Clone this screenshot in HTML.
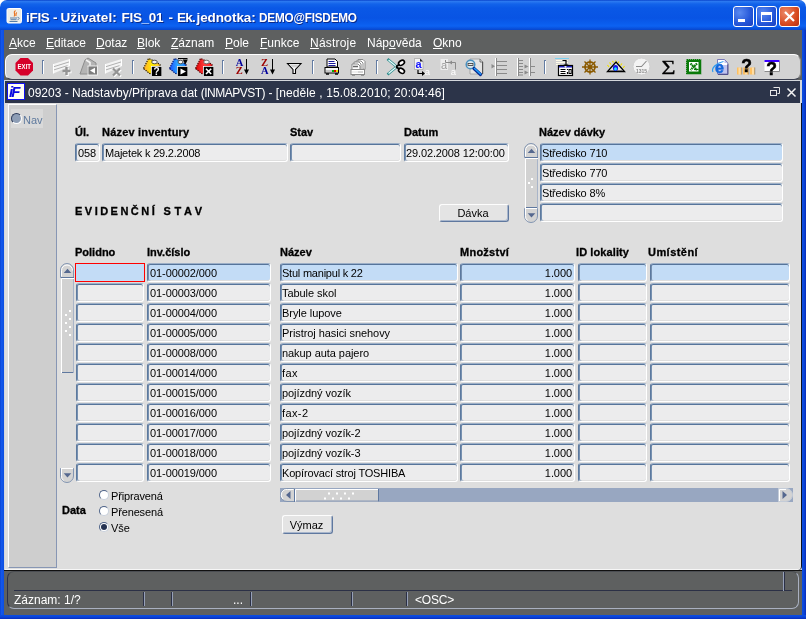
<!DOCTYPE html>
<html lang="cs"><head><meta charset="utf-8"><title>iFIS</title>
<style>
*{box-sizing:border-box;margin:0;padding:0}
html,body{width:806px;height:619px;overflow:hidden;background:#fff}
#w{position:absolute;left:0;top:0;width:806px;height:619px;will-change:transform}
body{position:relative;font-family:"Liberation Sans","DejaVu Sans",sans-serif;font-size:11px;color:#000}
.abs,.f,.lb,.btn,.t,.mi,.rad,.sep{position:absolute}
#title{left:0;top:0;width:806px;height:30px;border-radius:7px 7px 0 0;
 background:linear-gradient(#0a44cc 0,#2a78f0 1.500px,#1263ea 4px,#0a58e6 8px,#0854e4 18px,#0a5cec 23px,#0c62f2 26px,#0a54e0 28px,#0846cc 30px)}
#title .txt{position:absolute;left:26px;top:10px;font:bold 13.5px/16px "Liberation Sans","DejaVu Sans",sans-serif;color:#fff;white-space:nowrap;text-shadow:1px 1px 0 #0a2a8a;letter-spacing:-0.23px}
.wb{position:absolute;top:6px;width:21px;height:21px;border:1px solid #fff;border-radius:3px;background:radial-gradient(circle at 30% 30%,#5a8af0,#2456d8 60%,#1a3fc0)}
.wb.x{background:radial-gradient(circle at 30% 30%,#ec8a6a,#d84a20 60%,#b83010)}
#lbor{left:0;top:30px;width:4px;height:589px;background:linear-gradient(90deg,#0a44d4,#1458ec 40%,#0c4ee0)}
#rbor{left:802px;top:30px;width:4px;height:589px;background:linear-gradient(90deg,#0c4ee0,#0a44d8 50%,#0a2cb8)}
#bbor{left:0;top:615px;width:806px;height:4px;background:linear-gradient(#0c4ee0,#0a44d8 50%,#0a2cb8)}
#menu{left:4px;top:30px;width:798px;height:51px;background:#5e6060}
.mi{top:36px;font-size:12px;line-height:14px;color:#fff;white-space:nowrap}
.mi u{text-decoration:underline}
#tb{left:5px;top:54px;width:796px;height:26px;border-radius:7px;background:#d3d3d3;border:1px solid;border-color:#fff #8c8c8c #3a3f50 #fff}
.sep{top:60px;width:2px;height:14px;border-left:1px solid #647ca2;background:#fff;border-top:1px solid #647ca2}
#mdiw{left:4px;top:80px;width:798px;height:491px;background:#d4d7dc}
#mdit{left:5px;top:81px;width:795px;height:22px;background:#2c3449}
#mdit .txt{position:absolute;left:23px;top:5px;font-size:12px;line-height:14px;color:#fff;white-space:nowrap}
#mdii{left:7px;top:83px;width:18px;height:17px;background:#fffff4;border:1px solid #1010f0;overflow:hidden}
#mdii span{position:absolute;left:1px;top:-1px;font:italic bold 15px "Liberation Sans",sans-serif;color:#0a0ae0;letter-spacing:-2px}
#content{left:5px;top:103px;width:797px;height:467px;background:#dedede;border-radius:0 0 4px 0;border-right:1px solid #0c1020;box-shadow:inset 0 -1px 0 #f6f6f6}
#nav{left:8px;top:104px;width:49px;height:464px;background:#cecece;border:1px solid;border-color:#fff #8796b4 #8796b4 #fff}
#status{left:4px;top:570px;width:798px;height:45px;background:#5e6060;border-top:1px solid #111}
#sbox{left:7px;top:571px;width:792px;height:38px;border:1px solid;border-color:#4a4d52 #a9b0c0 #a9b0c0 #2b3046;border-radius:7px}
.sl{position:absolute;background:#2b3046}
.sv{position:absolute;top:592px;width:2px;height:14px;background:#2b3046;border-right:1px solid #96a0b8}
.lb{font-weight:bold;font-size:11px;white-space:nowrap;line-height:13px;-webkit-text-stroke:0.3px #000}
.f{height:19px;background:#ececed;border:1px solid;border-color:#9cafc7 #fff #fff #5c799e;box-shadow:inset 0 1px 0 #56749a,inset 1px 0 0 #7690b0,inset 0 -1px 0 #dedede;border-radius:3px;font-size:11px;line-height:14px;padding:2px 0 0 1px;white-space:nowrap;overflow:hidden;letter-spacing:-0.06px}
.f.u{}
.f.hl{background:#c3dcf6}
.f.cur{border:1px solid #f00;border-radius:0;box-shadow:none}
.f.r{text-align:right;padding-right:2px}
.f.n{letter-spacing:-0.08px;padding-left:2px}
.btn{background:#e4e4e4;border:1px solid;border-color:#fdfdfd #5f789f #5f789f #fdfdfd;border-radius:3px;font-size:11px;text-align:center;line-height:17px;box-shadow:inset -1px -1px 0 #a8b6cc}
.t{font-size:11px;white-space:nowrap;line-height:13px}
.rad{width:10px;height:10px;border-radius:50%;background:#fff;border:1px solid;border-color:#4e6388 #c8d0dc #c8d0dc #4e6388}
.rad.on::after{content:"";position:absolute;left:1px;top:1px;width:6px;height:6px;border-radius:50%;background:#243252}
.sb{position:absolute;background:#d2d2d2}
svg{position:absolute;left:0;top:0;overflow:visible}
svg text{font-family:"Liberation Sans",sans-serif}

</style></head>
<body>
<div id="w">
<div id="title" class="abs"><span class="txt" style="left:26px;letter-spacing:-0.3px">iFIS -</span><span class="txt" style="left:60.5px;letter-spacing:0.1px">Uživatel:</span><span class="txt" style="left:121.5px;letter-spacing:-0.3px">FIS_01</span><span class="txt" style="left:168.5px">-</span><span class="txt" style="left:177px;letter-spacing:-0.7px">Ek.</span><span class="txt" style="left:196.5px;letter-spacing:-0.1px">jednotka:</span><span class="txt" style="left:258.5px;transform:scaleX(0.870);transform-origin:0 0">DEMO@FISDEMO</span>
<div class="wb" style="left:733px"></div><div class="wb" style="left:756px"></div><div class="wb x" style="left:779px"></div></div>
<div id="menu" class="abs"></div>
<div id="lbor" class="abs"></div><div id="rbor" class="abs"></div><div id="bbor" class="abs"></div>
<span class="mi" style="left:9px"><u>A</u>kce</span>
<span class="mi" style="left:46px"><u>E</u>ditace</span>
<span class="mi" style="left:96px"><u>D</u>otaz</span>
<span class="mi" style="left:137px"><u>B</u>lok</span>
<span class="mi" style="left:171px"><u>Z</u>áznam</span>
<span class="mi" style="left:225px"><u>P</u>ole</span>
<span class="mi" style="left:260px"><u>F</u>unkce</span>
<span class="mi" style="left:310px;letter-spacing:0.2px"><u>N</u>ástroje</span>
<span class="mi" style="left:367px">Náp<u>o</u>věda</span>
<span class="mi" style="left:433px"><u>O</u>kno</span>
<div id="tb" class="abs"></div>
<div class="sep" style="left:42px"></div>
<div class="sep" style="left:132px"></div>
<div class="sep" style="left:222px"></div>
<div class="sep" style="left:312px"></div>
<div class="sep" style="left:376px"></div>
<div class="sep" style="left:544px"></div>
<div id="mdiw" class="abs"></div>
<div id="mdit" class="abs"><span class="txt">09203 - Nadstavby/Příprava dat <span style="letter-spacing:-0.5px">(INMAPVST)</span> - <span style="letter-spacing:0.1px">[neděle , 15.08.2010; 20:04:46]</span></span></div>
<div id="mdii" class="abs"><span>iF</span></div>
<div id="content" class="abs"></div>
<div id="nav" class="abs"></div>
<div class="abs" style="left:11px;top:109px;width:32px;height:19px;background:#d9d9d9"></div>
<div class="rad" style="left:11px;top:113px;width:11px;height:11px;background:#8d9db5;border-color:#2f3d5c #fff #fff #2f3d5c"></div>
<span class="t" style="left:23px;top:114px;color:#5f7a9e">Nav</span>
<span class="lb" style="left:75px;top:126px">Úl.</span>
<span class="lb" style="left:102px;top:126px;letter-spacing:0.2px">Název inventury</span>
<span class="lb" style="left:290px;top:126px">Stav</span>
<span class="lb" style="left:404px;top:126px">Datum</span>
<span class="lb" style="left:539px;top:126px">Název dávky</span>
<div class="f u n" style="left:75px;top:143px;width:25px">058</div>
<div class="f u" style="left:102px;top:143px;width:186px;letter-spacing:-0.2px;padding-left:2px">Majetek k 29.2.2008</div>
<div class="f u" style="left:290px;top:143px;width:111px"></div>
<div class="f u" style="left:404px;top:143px;width:105px;letter-spacing:-0.12px">29.02.2008 12:00:00</div>
<div class="f u hl" style="left:540px;top:143px;width:243px;letter-spacing:-0.15px">Středisko 710</div>
<div class="f u" style="left:540px;top:163px;width:243px;letter-spacing:-0.15px">Středisko 770</div>
<div class="f u" style="left:540px;top:183px;width:243px;letter-spacing:-0.15px">Středisko 8%</div>
<div class="f u" style="left:540px;top:203px;width:243px"></div>
<span class="lb" style="left:75px;top:205px;letter-spacing:2.48px">EVIDENČNÍ</span><span class="lb" style="left:163.500px;top:205px;letter-spacing:3.600px">STAV</span>
<div class="btn" style="left:439px;top:204px;width:70px;height:18px;line-height:16px;padding-right:2px">Dávka</div>
<span class="lb" style="left:75px;top:246px">Polidno</span>
<span class="lb" style="left:147px;top:246px">Inv.číslo</span>
<span class="lb" style="left:280px;top:246px">Název</span>
<span class="lb" style="left:460px;top:246px;letter-spacing:0.25px">Množství</span>
<span class="lb" style="left:576px;top:246px;letter-spacing:0.1px">ID lokality</span>
<span class="lb" style="left:648px;top:246px;letter-spacing:0.45px">Umístění</span>
<div class="f hl cur" style="left:75px;top:263px;width:70px"></div>
<div class="f hl n" style="left:147px;top:263px;width:124px">01-00002/000</div>
<div class="f hl" style="left:280px;top:263px;width:178px;letter-spacing:-0.22px">Stul manipul k 22</div>
<div class="f hl r n" style="left:460px;top:263px;width:115px">1.000</div>
<div class="f hl" style="left:578px;top:263px;width:69px"></div>
<div class="f hl" style="left:650px;top:263px;width:140px"></div>
<div class="f" style="left:76px;top:283px;width:68px"></div>
<div class="f n" style="left:147px;top:283px;width:124px">01-00003/000</div>
<div class="f" style="left:280px;top:283px;width:178px">Tabule skol</div>
<div class="f r n" style="left:460px;top:283px;width:115px">1.000</div>
<div class="f" style="left:578px;top:283px;width:69px"></div>
<div class="f" style="left:650px;top:283px;width:140px"></div>
<div class="f" style="left:76px;top:303px;width:68px"></div>
<div class="f n" style="left:147px;top:303px;width:124px">01-00004/000</div>
<div class="f" style="left:280px;top:303px;width:178px">Bryle lupove</div>
<div class="f r n" style="left:460px;top:303px;width:115px">1.000</div>
<div class="f" style="left:578px;top:303px;width:69px"></div>
<div class="f" style="left:650px;top:303px;width:140px"></div>
<div class="f" style="left:76px;top:323px;width:68px"></div>
<div class="f n" style="left:147px;top:323px;width:124px">01-00005/000</div>
<div class="f" style="left:280px;top:323px;width:178px">Pristroj hasici snehovy</div>
<div class="f r n" style="left:460px;top:323px;width:115px">1.000</div>
<div class="f" style="left:578px;top:323px;width:69px"></div>
<div class="f" style="left:650px;top:323px;width:140px"></div>
<div class="f" style="left:76px;top:343px;width:68px"></div>
<div class="f n" style="left:147px;top:343px;width:124px">01-00008/000</div>
<div class="f" style="left:280px;top:343px;width:178px">nakup auta pajero</div>
<div class="f r n" style="left:460px;top:343px;width:115px">1.000</div>
<div class="f" style="left:578px;top:343px;width:69px"></div>
<div class="f" style="left:650px;top:343px;width:140px"></div>
<div class="f" style="left:76px;top:363px;width:68px"></div>
<div class="f n" style="left:147px;top:363px;width:124px">01-00014/000</div>
<div class="f" style="left:280px;top:363px;width:178px;letter-spacing:0.4px">fax</div>
<div class="f r n" style="left:460px;top:363px;width:115px">1.000</div>
<div class="f" style="left:578px;top:363px;width:69px"></div>
<div class="f" style="left:650px;top:363px;width:140px"></div>
<div class="f" style="left:76px;top:383px;width:68px"></div>
<div class="f n" style="left:147px;top:383px;width:124px">01-00015/000</div>
<div class="f" style="left:280px;top:383px;width:178px">pojízdný vozík</div>
<div class="f r n" style="left:460px;top:383px;width:115px">1.000</div>
<div class="f" style="left:578px;top:383px;width:69px"></div>
<div class="f" style="left:650px;top:383px;width:140px"></div>
<div class="f" style="left:76px;top:403px;width:68px"></div>
<div class="f n" style="left:147px;top:403px;width:124px">01-00016/000</div>
<div class="f" style="left:280px;top:403px;width:178px;letter-spacing:0.4px">fax-2</div>
<div class="f r n" style="left:460px;top:403px;width:115px">1.000</div>
<div class="f" style="left:578px;top:403px;width:69px"></div>
<div class="f" style="left:650px;top:403px;width:140px"></div>
<div class="f" style="left:76px;top:423px;width:68px"></div>
<div class="f n" style="left:147px;top:423px;width:124px">01-00017/000</div>
<div class="f" style="left:280px;top:423px;width:178px">pojízdný vozík-2</div>
<div class="f r n" style="left:460px;top:423px;width:115px">1.000</div>
<div class="f" style="left:578px;top:423px;width:69px"></div>
<div class="f" style="left:650px;top:423px;width:140px"></div>
<div class="f" style="left:76px;top:443px;width:68px"></div>
<div class="f n" style="left:147px;top:443px;width:124px">01-00018/000</div>
<div class="f" style="left:280px;top:443px;width:178px">pojízdný vozík-3</div>
<div class="f r n" style="left:460px;top:443px;width:115px">1.000</div>
<div class="f" style="left:578px;top:443px;width:69px"></div>
<div class="f" style="left:650px;top:443px;width:140px"></div>
<div class="f" style="left:76px;top:463px;width:68px"></div>
<div class="f n" style="left:147px;top:463px;width:124px">01-00019/000</div>
<div class="f" style="left:280px;top:463px;width:178px;letter-spacing:-0.17px">Kopírovací stroj TOSHIBA</div>
<div class="f r n" style="left:460px;top:463px;width:115px">1.000</div>
<div class="f" style="left:578px;top:463px;width:69px"></div>
<div class="f" style="left:650px;top:463px;width:140px"></div>
<span class="lb" style="left:62px;top:504px">Data</span>
<div class="rad" style="left:99px;top:490px"></div>
<div class="rad" style="left:99px;top:506px"></div>
<div class="rad on" style="left:99px;top:522px"></div>
<span class="t" style="left:111px;top:490px;letter-spacing:-0.15px">Připravená</span>
<span class="t" style="left:111px;top:506px;letter-spacing:-0.15px">Přenesená</span>
<span class="t" style="left:111px;top:522px">Vše</span>
<div class="btn" style="left:282px;top:515px;width:51px;height:19px;padding:1px 2px 0 0;line-height:16px">Výmaz</div>
<div id="status" class="abs"></div>
<div id="sbox" class="abs"></div>
<div class="sl" style="left:14px;top:590px;width:778px;height:1px"></div>
<div class="sv" style="left:143px"></div>
<div class="sv" style="left:171px"></div>
<div class="sv" style="left:250px"></div>
<div class="sv" style="left:351px"></div>
<div class="sv" style="left:406px"></div>
<div class="sv" style="left:783px;top:572px;height:19px;background:#96a0b8;border-right:1px solid #2b3046"></div>
<span class="t" style="left:14px;top:593px;color:#fff;font-size:12px;line-height:14px">Záznam: 1/?</span>
<span class="t" style="left:233px;top:593px;color:#fff;font-size:12px;line-height:14px">...</span>
<span class="t" style="left:415px;top:593px;color:#fff;font-size:12px;line-height:14px;letter-spacing:-0.2px">&lt;OSC&gt;</span>
<svg width="806" height="619" viewBox="0 0 806 619">
<path d="M524.5 157.5V150.0A6.5 6.5 0 0 1 537.5 150.0V157.5z" fill="#d3d3d3" stroke="#8295b2" stroke-width="1"/><path d="M525.5 156.5V150.5A5.5 5.5 0 0 1 536.5 150.5" fill="none" stroke="#fff" stroke-width="1"/><path d="M525 157.5H538" stroke="#5f789f" stroke-width="1"/><polygon points="527.7,153 535.3,153 531.5,148.8" fill="#55688f"/>
<rect x="525" y="158" width="13" height="50" fill="#d2d2d2"/><path d="M525.5 208V158.5H538" fill="none" stroke="#fff" stroke-width="1"/><path d="M526 207.5H538" stroke="#5f789f" stroke-width="1"/><path d="M537.5 159V208" stroke="#a8b4c8" stroke-width="1"/><rect x="531" y="178" width="2" height="2" fill="#fff"/><rect x="528" y="182" width="2" height="2" fill="#fff"/><rect x="531" y="186" width="2" height="2" fill="#fff"/><rect x="531" y="186" width="2" height="2" fill="#fff"/>
<path d="M524.5 208.5V216.0A6.5 6.5 0 0 0 537.5 216.0V208.5z" fill="#d3d3d3" stroke="#8295b2" stroke-width="1"/><path d="M525 208.5H537" stroke="#fff" stroke-width="1"/><path d="M525.5 208.5V215.5A5.5 5.5 0 0 0 527.5 220.5" fill="none" stroke="#fff" stroke-width="1"/><polygon points="527.7,213.2 535.3,213.2 531.5,217.4" fill="#55688f"/>
<path d="M60.5 277.5V270.0A6.5 6.5 0 0 1 73.5 270.0V277.5z" fill="#d3d3d3" stroke="#8295b2" stroke-width="1"/><path d="M61.5 276.5V270.5A5.5 5.5 0 0 1 72.5 270.5" fill="none" stroke="#fff" stroke-width="1"/><path d="M61 277.5H74" stroke="#5f789f" stroke-width="1"/><polygon points="63.7,273 71.3,273 67.5,268.8" fill="#55688f"/>
<rect x="61" y="278" width="13" height="95" fill="#d2d2d2"/><path d="M61.5 373V278.5H74" fill="none" stroke="#fff" stroke-width="1"/><path d="M62 372.5H74" stroke="#5f789f" stroke-width="1"/><path d="M73.5 279V373" stroke="#a8b4c8" stroke-width="1"/><rect x="69" y="310" width="2" height="2" fill="#fff"/><rect x="69" y="318" width="2" height="2" fill="#fff"/><rect x="69" y="326" width="2" height="2" fill="#fff"/><rect x="69" y="334" width="2" height="2" fill="#fff"/><rect x="65" y="314" width="2" height="2" fill="#fff"/><rect x="65" y="322" width="2" height="2" fill="#fff"/><rect x="65" y="330" width="2" height="2" fill="#fff"/>
<path d="M60.5 468.5V476.0A6.5 6.5 0 0 0 73.5 476.0V468.5z" fill="#d3d3d3" stroke="#8295b2" stroke-width="1"/><path d="M61 468.5H73" stroke="#fff" stroke-width="1"/><path d="M61.5 468.5V475.5A5.5 5.5 0 0 0 63.5 480.5" fill="none" stroke="#fff" stroke-width="1"/><polygon points="63.7,473.2 71.3,473.2 67.5,477.4" fill="#55688f"/>
<rect x="280" y="488" width="513" height="14" fill="#98a7c1"/>
<path d="M294.500 488.500H287A6.500 6.500 0 0 0 287 501.500H294.500z" fill="#d3d3d3" stroke="#8295b2" stroke-width="1"/>
<path d="M293.500 489.500H287.500A5.500 5.500 0 0 0 283 499" fill="none" stroke="#fff" stroke-width="1"/>
<polygon points="290.500,491 290.500,499 286,495" fill="#55688f"/>
<path d="M294.500 489V502" stroke="#5f789f" stroke-width="1"/>
<rect x="295" y="489" width="84" height="12.500" fill="#d2d2d2"/>
<path d="M295.500 501.500V489.500H378" fill="none" stroke="#fff" stroke-width="1"/>
<path d="M378.500 489V501.500" stroke="#5f789f" stroke-width="1"/>
<path d="M296 501H378" stroke="#8a9ab6" stroke-width="1"/>
<rect x="328" y="492.500" width="2" height="2" fill="#fff"/>
<rect x="324" y="497.500" width="2" height="2" fill="#fff"/>
<rect x="336" y="492.500" width="2" height="2" fill="#fff"/>
<rect x="332" y="497.500" width="2" height="2" fill="#fff"/>
<rect x="344" y="492.500" width="2" height="2" fill="#fff"/>
<rect x="340" y="497.500" width="2" height="2" fill="#fff"/>
<rect x="352" y="492.500" width="2" height="2" fill="#fff"/>
<rect x="348" y="497.500" width="2" height="2" fill="#fff"/>
<path d="M778.500 488.500H786A6.500 6.500 0 0 1 786 501.500H778.500z" fill="#d3d3d3" stroke="#c4ccd8" stroke-width="1"/>
<path d="M779.500 501V489.500H786" fill="none" stroke="#fff" stroke-width="1"/>
<polygon points="782.500,491 782.500,499 787,495" fill="#55688f"/>
</svg>
<svg width="806" height="619" viewBox="0 0 806 619" shape-rendering="auto">
<!-- title bar java icon -->
<g>
<rect x="7" y="8.5" width="14.5" height="14.5" rx="1.5" fill="#efede6" stroke="#fff" stroke-width="1"/>
<path d="M10 18h7M10.5 19.7h6M9.5 21.5h8" stroke="#5a7fa8" stroke-width="1" fill="none"/>
<path d="M17.5 17.3c2.2 0 2.2 2 0 2.4" stroke="#5a7fa8" stroke-width="1" fill="none"/>
<path d="M15.5 10.5c-3.5 2.500 1 3-1.500 6M16.800 12.500c-2 1.500 0 2-1 3.500" stroke="#e8701c" stroke-width="1.100" fill="none"/>
</g>
<!-- window buttons glyphs -->
<rect x="738" y="19" width="7" height="3" fill="#fff"/>
<rect x="761.5" y="12.5" width="10" height="9" fill="none" stroke="#fff" stroke-width="1"/><rect x="761" y="12" width="11" height="3" fill="#fff"/>
<path d="M785 12l9 9M794 12l-9 9" stroke="#fff" stroke-width="2.2" fill="none"/>
<!-- MDI controls -->
<path d="M773.500 87.500h6v6h-2" stroke="#e8e8e8" fill="none"/><rect x="770.500" y="90.500" width="6" height="5" fill="#2b3046" stroke="#e8e8e8"/>
<path d="M787.500 88.500l8 8M795.500 88.500l-8 8" stroke="#f4f4f4" stroke-width="1.5" fill="none"/>
<!-- 1 EXIT -->
<polygon points="20.500,58 28,58 33,63 33,70.500 28,75.500 20.500,75.500 15.500,70.500 15.500,63" fill="#d6002a"/>
<text x="24.300" y="69.300" font-size="6.700" font-weight="bold" fill="#fff" text-anchor="middle" textLength="13.500" lengthAdjust="spacingAndGlyphs">EXIT</text>
<!-- 3 insert record (disabled) -->
<polygon points="53.5,64 69.5,59 69.5,66.5 53.5,73.5" fill="#f4f4f4"/>
<path d="M53.5 66.800l16-5M53.5 70l14-4.400" stroke="#b0b0b0" stroke-width="1" fill="none"/>
<path d="M53.500 64v9.500M69.500 59v7" stroke="#fff" stroke-width="1" fill="none"/>
<path d="M67.500 68v8M63.500 72h8" stroke="#fff" stroke-width="2.400" fill="none"/>
<path d="M66.500 67v8M62.500 71h8" stroke="#949494" stroke-width="2.400" fill="none"/>
<!-- 4 folder with back arrow (disabled) -->
<path d="M80 74l5-14 3-2 8 5v4h-8v7z" fill="#b4b4b4" stroke="#8c8c8c" stroke-width="1"/>
<path d="M86 60l4 2.500v3" stroke="#f4f4f4" stroke-width="1.500" fill="none"/>
<rect x="88" y="66" width="9.500" height="9" fill="#7e7e7e" stroke="#fff" stroke-width="0.800"/>
<polygon points="95,67.800 95,73.400 90,70.600" fill="#fff"/>
<!-- 5 delete record (disabled) -->
<polygon points="105.5,64 121.5,59 121.5,66.5 105.5,73.5" fill="#f4f4f4"/>
<path d="M105.5 66.800l16-5M105.5 70l14-4.400" stroke="#b0b0b0" stroke-width="1" fill="none"/>
<path d="M105.500 64v9.500M121.500 59v7" stroke="#fff" stroke-width="1" fill="none"/>
<path d="M114 69.500l7 7M121 69.500l-7 7" stroke="#fff" stroke-width="2" fill="none"/>
<path d="M113 68.500l7 7M120 68.500l-7 7" stroke="#949494" stroke-width="2.200" fill="none"/>
<!-- 7 yellow folder ? -->
<g>
<linearGradient id="gy" x1="0" y1="0" x2="1" y2="0"><stop offset="0" stop-color="#ffa830"/><stop offset="0.550" stop-color="#fff000"/><stop offset="1" stop-color="#ffc040"/></linearGradient>
<path d="M143.5 68.5L148.5 58.5L152 60L160 64.5V68H152V74L149.5 73.5z" fill="url(#gy)" stroke="#2a1c00" stroke-width="1.200" stroke-dasharray="1.300 1.100"/>
<ellipse cx="154.500" cy="62" rx="2.800" ry="1.800" fill="#f4f4f4" stroke="#444" stroke-width="0.900"/>
<rect x="151" y="66" width="10.500" height="10" fill="#fff"/>
<rect x="151.800" y="66.800" width="9.600" height="9.200" fill="#000"/>
<text x="156.600" y="75.300" font-size="10" font-weight="bold" fill="#fff" text-anchor="middle">?</text>
</g>
<!-- 8 blue folder play -->
<g>
<linearGradient id="gb" x1="0" y1="0" x2="1" y2="0"><stop offset="0" stop-color="#1a50ff"/><stop offset="0.550" stop-color="#30b0ff"/><stop offset="1" stop-color="#2080ff"/></linearGradient>
<path d="M169.5 68.5L174.5 58.5L178 60L186 64.5V68H178V74L175.5 73.5z" fill="url(#gb)" stroke="#00106a" stroke-width="1.200" stroke-dasharray="1.300 1.100"/>
<path d="M178 58.500h9.500" stroke="#000" stroke-width="1"/>
<ellipse cx="180.500" cy="62" rx="2.500" ry="1.800" fill="#f4f4f4" stroke="#444" stroke-width="0.900"/>
<polygon points="182.800,59.500 187.800,59.500 185.300,64.800" fill="#000"/>
<rect x="177" y="66" width="10.500" height="10" fill="#fff"/>
<rect x="177.800" y="66.800" width="9.600" height="9.200" fill="#000"/>
<polygon points="180.500,68.500 180.500,74.500 186,71.500" fill="#fff"/>
</g>
<!-- 9 red folder X -->
<g>
<linearGradient id="gr" x1="0" y1="0" x2="1" y2="0"><stop offset="0" stop-color="#e00000"/><stop offset="0.550" stop-color="#ff4040"/><stop offset="1" stop-color="#ff2020"/></linearGradient>
<path d="M195.5 68.5L200.5 58.5L204 60L212 64.5V68H204V74L201.5 73.5z" fill="url(#gr)" stroke="#500000" stroke-width="1.200" stroke-dasharray="1.300 1.100"/>
<ellipse cx="206.500" cy="62" rx="2.800" ry="1.800" fill="#f4f4f4" stroke="#666" stroke-width="0.900"/>
<rect x="203" y="66" width="10.500" height="10" fill="#fff"/>
<rect x="203.800" y="66.800" width="9.600" height="9.200" fill="#000"/>
<path d="M206 68.800l5.200 5.200M211.200 68.800l-5.200 5.200" stroke="#fff" stroke-width="1.600" fill="none"/>
</g>
<!-- 11 sort A-Z -->
<g font-family="Liberation Serif, serif" font-weight="bold" font-size="10.500">
<text x="239.500" y="66" fill="#00009c" text-anchor="middle" style="font-family:'Liberation Serif',serif">A</text>
<text x="239.300" y="74.200" fill="#9c0000" text-anchor="middle" style="font-family:'Liberation Serif',serif">Z</text>
<text x="264.500" y="66" fill="#9c0000" text-anchor="middle" style="font-family:'Liberation Serif',serif">Z</text>
<text x="264.700" y="74.200" fill="#00009c" text-anchor="middle" style="font-family:'Liberation Serif',serif">A</text>
</g>
<path d="M246.500 59v13" stroke="#000" stroke-width="1"/><polygon points="244,69.500 249,69.500 246.500,74.500" fill="#000"/>
<path d="M272.500 59v13" stroke="#000" stroke-width="1"/><polygon points="270,69.500 275,69.500 272.500,74.500" fill="#000"/>
<!-- 13 funnel -->
<path d="M287.500 63.500h13.500l-5.500 6v4h-2.500v-4z" fill="#fff" stroke="#000" stroke-width="1.100" stroke-linejoin="miter"/>
<path d="M289.500 64.500h9.500l-3 3h-3.500z" fill="#d0d0d0"/>
<!-- 15 printer -->
<g>
<path d="M327 67v-8h8l2.500 2.500v5.500z" fill="#fff" stroke="#000" stroke-width="1"/>
<path d="M328.500 61.500h6M328.500 63.500h7M328.500 65.500h7" stroke="#1a1a9c" stroke-width="1"/>
<rect x="325" y="67.500" width="13.500" height="5.500" fill="#f4f4f4" stroke="#000" stroke-width="1"/>
<rect x="326" y="70" width="6" height="2" fill="#c8c8c8"/>
<rect x="332" y="70" width="2" height="2" fill="#00b000"/><rect x="334" y="70" width="2" height="2" fill="#e00000"/><rect x="336" y="70" width="2" height="2" fill="#f0e000"/>
<path d="M326 74h3M335 74h3" stroke="#000" stroke-width="1.500"/>
</g>
<!-- 16 print preview stack (disabled) -->
<g fill="#fff" stroke="#8a8a8a" stroke-width="1">
<path d="M358 68v-8.500h5l2 2v8z"/>
<path d="M356 69v-8h5l2 2v8z"/>
<path d="M354 70v-8h5l2 2v8z"/>
<path d="M352 71v-7h6l2 2v5z"/>
<rect x="351" y="69.500" width="13.500" height="5" />
</g>
<path d="M353 66.500h5" stroke="#666" stroke-width="1.500"/>
<path d="M352 72h6" stroke="#ddd" stroke-width="1"/><path d="M358 72h5" stroke="#aaa" stroke-width="1"/>
<path d="M352 75.500h3M361 75.500h3" stroke="#999" stroke-width="1"/>
<!-- 18 scissors -->
<g>
<path d="M387.500 59l10 8.500" stroke="#2a8a8a" stroke-width="2.600"/>
<path d="M387.500 74.500l10-8.500" stroke="#2a8a8a" stroke-width="2.600"/>
<path d="M388.500 60l8.500 7" stroke="#e8ffff" stroke-width="1.200"/>
<path d="M388.500 73.500l8.500-7" stroke="#e8ffff" stroke-width="1.200"/>
<ellipse cx="401.500" cy="62.800" rx="3.200" ry="2.200" transform="rotate(-35 401.500 62.800)" fill="#fff" stroke="#000" stroke-width="1.600"/>
<ellipse cx="401.500" cy="70.800" rx="3.200" ry="2.200" transform="rotate(35 401.500 70.800)" fill="#fff" stroke="#000" stroke-width="1.600"/>
<path d="M396 66.800l3.500-2.500M396 66.800l3.500 2.500" stroke="#000" stroke-width="1.800"/>
</g>
<!-- 19 copy -->
<g>
<path d="M414.500 58.500h5.500l3 3v8h-8.500z" fill="#f4f4f4" stroke="#999" stroke-width="0.600"/>
<path d="M420 58.500v3h3z" fill="#222"/>
<text x="418.600" y="67.800" font-size="11" fill="#1414ff" text-anchor="middle" font-weight="bold">a</text>
<path d="M418 70v3.500h5" stroke="#000" stroke-width="1.200" fill="none"/><polygon points="422,71 425,73.500 422,76" fill="#000"/>
<text x="427.500" y="74.500" font-size="9.500" fill="#fff" text-anchor="middle">a</text>
</g>
<!-- 20 paste (disabled) -->
<g>
<rect x="440.500" y="59" width="7.500" height="11" fill="#eee"/>
<text x="444" y="68.500" font-size="11" fill="#9a9a9a" text-anchor="middle">a</text>
<path d="M445.500 60v2.500h10v7" stroke="#8a8a8a" stroke-width="1" fill="none"/><polygon points="452,60.500 449,62.500 452,64.500" fill="#8a8a8a"/>
<text x="453.500" y="75" font-size="9.500" fill="#fff" text-anchor="middle">a</text>
</g>
<!-- 21 magnifier -->
<g>
<path d="M470 59h10l3 3v12h-13z" fill="#e4e4e4" stroke="#9a9a9a" stroke-width="0.800"/>
<path d="M480 59v3h3" fill="none" stroke="#555" stroke-width="0.800"/>
<path d="M482.500 62v12" stroke="#555" stroke-width="1"/>
<circle cx="470.500" cy="64.500" r="4.300" fill="#d8e8f0" stroke="#4a90c0" stroke-width="1.500"/>
<rect x="468" y="63.500" width="5" height="2" fill="#eee" stroke="#333" stroke-width="0.800"/>
<path d="M474 68.500l6.500 6" stroke="#0a2a90" stroke-width="3.200" stroke-linecap="round"/>
<path d="M474.500 68.500l6 5.500" stroke="#1aa0ff" stroke-width="1.500" stroke-linecap="round"/>
</g>
<!-- 22 list icon 1 (disabled) -->
<g>
<path d="M495.500 58v18" stroke="#fff" stroke-width="1"/><path d="M496.500 58v18" stroke="#8a8a8a" stroke-width="1"/>
<path d="M497 61.500h10M497 65.500h10M497 69.500h10M497 73.500h10" stroke="#8a8a8a" stroke-width="1"/>
<polygon points="491.500,64 491.500,68.500 495,66.200" fill="#8a8a8a"/>
</g>
<!-- 23 list icon 2 (disabled) -->
<g>
<path d="M517.500 58v18M529.500 58v18" stroke="#fff" stroke-width="1"/><path d="M518.500 58v18M530.500 58v18" stroke="#8a8a8a" stroke-width="1"/>
<path d="M519 60.500h4M519 63.500h4M519 66.500h4M519 69.500h4M519 72.500h4M519 75h4M531 66.500h4M531 72.500h4" stroke="#8a8a8a" stroke-width="1"/>
<polygon points="524.500,64.500 524.500,68.500 528.500,66.500" fill="#8a8a8a"/>
<polygon points="524.500,70.500 524.500,74.500 528.500,72.500" fill="#8a8a8a"/>
</g>
<!-- 25 form/calendar icon -->
<g>
<path d="M555 58.500h14" stroke="#7ad0f0" stroke-width="1"/>
<path d="M556 60.500h12M556 62.500h12M556 64.500h4" stroke="#fffbe8" stroke-width="1.200"/>
<path d="M562.500 60.500h3.500v5" stroke="#000" stroke-width="1.200" fill="none"/>
<polygon points="563.500,64.500 568.500,64.500 566,67.500" fill="#000"/>
<rect x="558.500" y="65.500" width="14" height="10" fill="#fff" stroke="#000" stroke-width="1.200"/>
<path d="M559 66h5l1.500 1.500 1.500-1.500h5v1.500h-13z" fill="#1a1ab0"/>
<path d="M560.500 69.500h5M560.500 71.500h5M560.500 73.500h5" stroke="#000" stroke-width="1"/>
<path d="M567.500 69v1M567.500 72v2" stroke="#000" stroke-width="1.200"/>
<rect x="569" y="69.500" width="2.200" height="4" fill="none" stroke="#000" stroke-width="1"/>
</g>
<!-- 26 ship wheel -->
<g stroke="#8a5a00" fill="none">
<circle cx="590" cy="67" r="5" stroke-width="1.800"/>
<path d="M582 67h16M590 59.500v15M584.500 61.500l11 11M595.500 61.500l-11 11" stroke-width="1.300"/>
<circle cx="590" cy="67" r="1.500" fill="#8a5a00"/>
</g>
<!-- 27 eye pyramid -->
<g>
<polygon points="616,62 624.500,71.500 607.500,71.500" fill="#e4e4e4" stroke="#000" stroke-width="1.300"/>
<path d="M609.500 70.500h13" stroke="#777" stroke-width="1"/>
<ellipse cx="615.500" cy="68" rx="2.600" ry="3" fill="#1414e8"/>
<ellipse cx="615.500" cy="68.800" rx="1.500" ry="1.600" fill="#1ae0ff"/>
<path d="M607.500 65l1.500 2M609.500 62.500l1.500 2M612.500 61l1 1.500M615.500 60.500v1M619 61.500l-1 1.500M622 63.500l-1.500 2M624.500 66l-1.500 2" stroke="#f0e000" stroke-width="1.200"/>
</g>
<!-- 28 clock (disabled) -->
<g>
<circle cx="641.500" cy="66.500" r="8.500" fill="#f3f3f3" stroke="#cfcfcf" stroke-width="1"/>
<path d="M636 66.500h5.500l5-5.500" stroke="#8a8a8a" stroke-width="1.100" fill="none"/>
<text x="641.500" y="73" font-size="5" fill="#8a8a8a" text-anchor="middle" font-weight="bold">1315</text>
</g>
<!-- 29 sigma -->
<text transform="translate(668.500 74) scale(1.300 1)" x="0" y="0" font-size="18.500" fill="#000" stroke="#000" stroke-width="0.300" text-anchor="middle" style="font-family:'Liberation Serif','DejaVu Serif',serif">Σ</text>
<!-- 30 excel -->
<g>
<rect x="686" y="59" width="15.500" height="15.500" fill="#0a7a0a"/>
<rect x="686" y="59" width="15.500" height="15.500" fill="none" stroke="#d3d3d3" stroke-width="1" stroke-dasharray="1 1"/>
<rect x="689" y="62" width="9.500" height="9.500" fill="#fff"/>
<path d="M690.500 63.500l6.500 6.500M697 63.500l-6.500 6.500" stroke="#0a7a0a" stroke-width="2.200" stroke-dasharray="1.600 0.500"/>
<path d="M694 69.500h4.500" stroke="#0a7a0a" stroke-width="1.200"/>
</g>
<!-- 31 IE page -->
<g>
<path d="M717.500 59.500h7l3 3v11.500h-10z" fill="#c0c4ee" stroke="#7a7ab8" stroke-width="1"/>
<path d="M718 60h6.500v3h3v2h-9.500z" fill="#fff"/>
<path d="M728 63.500v11h-10" stroke="#50508c" stroke-width="1" fill="none"/>
<text x="719.500" y="72.500" font-size="16" font-weight="bold" fill="#1468dc" text-anchor="middle" stroke="#1468dc" stroke-width="0.500">e</text>
<path d="M713 72c-2-3.500 3-9 10.500-10.500" stroke="#2a9af0" stroke-width="1.200" fill="none"/>
</g>
<!-- 32 ? with boxes -->
<g>
<rect x="737" y="67.500" width="5" height="7" fill="#ffc060"/><rect x="738.500" y="67.500" width="2" height="7" fill="#fff0d0" opacity="0.600"/>
<rect x="743" y="67.500" width="6" height="7" fill="#ffc060"/><rect x="745" y="67.500" width="2" height="7" fill="#fff0d0" opacity="0.600"/>
<rect x="750" y="67.500" width="5" height="7" fill="#ffc060"/><rect x="752" y="67.500" width="2" height="7" fill="#fff0d0" opacity="0.600"/>
<path d="M741.800 67.500v7M748.800 67.500v7M754.800 67.500v7" stroke="#8a8a8a" stroke-width="0.800"/>
<text x="746.500" y="71.800" font-size="17.500" font-weight="bold" fill="#000" stroke="#000" stroke-width="0.500" text-anchor="middle">?</text>
</g>
<!-- 33 help window -->
<g>
<rect x="764.500" y="60" width="15" height="11.500" fill="#fff"/>
<path d="M764.500 71.500h15v-10" stroke="#8a8a8a" stroke-width="1" fill="none"/>
<rect x="764.500" y="60" width="15" height="2" fill="#3a00ff"/>
<text x="771.500" y="75" font-size="17.500" font-weight="bold" fill="#000" stroke="#000" stroke-width="0.500" text-anchor="middle">?</text>
</g>
</svg>
</div>
</body></html>
